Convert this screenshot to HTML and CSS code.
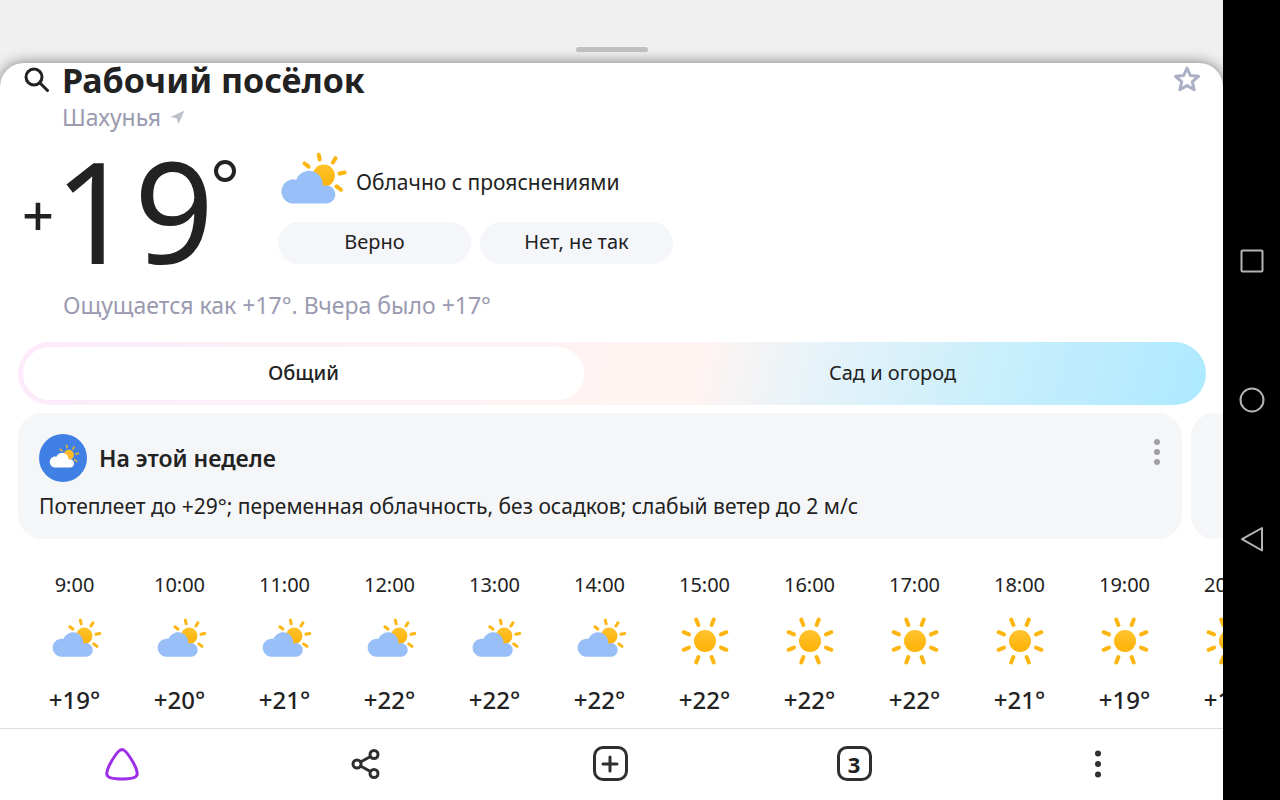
FILE: index.html
```html
<!doctype html>
<html lang="ru">
    <head>
        <meta charset="utf-8">
        <meta name="viewport" content="width=device-width, initial-scale=1">
        <title>Погода — Рабочий посёлок</title>
        <link rel="stylesheet" href="styles.css">
    </head>

    <body>
        <svg class="defs" width="0" height="0" aria-hidden="true">
            <linearGradient id="sunfill" x1="0" y1="0" x2="0" y2="1">
                <stop offset="0" stop-color="#ffc32e"/>
                <stop offset="1" stop-color="#fdb206"/>
            </linearGradient>
            <symbol id="cloudy" viewBox="827 347 223 223">
                <circle cx="975" cy="438" r="33" fill="url(#sunfill)"/>
                <path d="M960 376l3 14M1010 386l-8 13M1022 432l15-3M1013 470l13 10M918 402l12 9" fill="none" stroke="#fdb511" stroke-width="12" stroke-linecap="round"/>
                <path d="M882 521a36 36 0 1 1 11-71a41 41 0 0 1 79 19a27 27 0 1 1 9 52z" fill="#98bff8"/>
            </symbol>
            <symbol id="sunny" viewBox="0 0 56 56">
                <circle cx="28" cy="28" r="11" fill="url(#sunfill)"/>
                <g id="rays" stroke="#fdb511" stroke-width="4" stroke-linecap="round">
                    <path d="M34.6 12l2.2-5.4M44 21.4l5.4-2.2M44 34.6l5.4 2.2M34.6 44l2.2 5.4M21.4 44l-2.2 5.4M12 34.6l-5.4 2.2M12 21.4l-5.4-2.2M21.4 12l-2.2-5.4"/>
                </g>
            </symbol>
        </svg>

        <div class="app">
            <div class="grabarea"><div class="grab"></div></div>

            <main class="sheet">
                <header class="place">
                    <button class="iconbtn" aria-label="Поиск">
                        <svg width="26" height="26" viewBox="0 0 26 26" fill="none" stroke="#222" stroke-width="3" stroke-linecap="round"><circle cx="11" cy="10" r="8"/><path d="M17 16l7.500 7.500"/></svg>
                    </button>
                    <h1>Рабочий посёлок</h1>
                    <button class="iconbtn star" aria-label="В избранное">
                        <svg width="28" height="28" viewBox="0 0 28 28" fill="none" stroke="#acb0c6" stroke-width="3" stroke-linejoin="round"><path d="M14 2l3.300 7.500 8.200.8-6.200 5.400 1.900 8.100L14 19.600l-7.200 4.200 1.900-8.100-6.200-5.400 8.200-.8z"/></svg>
                    </button>
                </header>
                <div class="region">
                    <span>Шахунья</span>
                    <svg width="15" height="15" viewBox="0 0 15 15" fill="#bbc0ca"><path d="M14.500.5L8.500 14 6.700 8.300.5 6.900z"/></svg>
                </div>

                <section class="now">
                    <div class="temp"><span class="sign">+</span><span class="value">19</span><span class="deg"></span></div>
                    <div class="condition">
                        <div class="state">
                            <svg class="bigicon"><use href="#cloudy"/></svg>
                            <span>Облачно с прояснениями</span>
                        </div>
                        <div class="answers">
                            <button>Верно</button>
                            <button>Нет, не так</button>
                        </div>
                    </div>
                </section>
                <p class="feels">Ощущается как +17°. Вчера было +17°</p>

                <div class="modes">
                    <button class="active">Общий</button>
                    <button>Сад и огород</button>
                </div>

                <div class="cards">
                    <article class="card">
                        <div class="cardhead">
                            <span class="badge"><svg width="34" height="34" viewBox="825 347 223 223"><circle cx="975" cy="438" r="33" fill="#fdb92a"/><path d="M960 376l3 14M1010 386l-8 13M1022 432l15-3M1013 470l13 10M918 402l12 9" fill="none" stroke="#d5ad45" stroke-width="12" stroke-linecap="round"/><path d="M882 521a36 36 0 1 1 11-71a41 41 0 0 1 79 19a27 27 0 1 1 9 52z" fill="#fff"/></svg></span>
                            <h2>На этой неделе</h2>
                            <button class="iconbtn" aria-label="Ещё">
                                <svg width="8" height="28" viewBox="0 0 8 28" fill="#a0a0a2"><circle cx="4" cy="4" r="3"/><circle cx="4" cy="14" r="3"/><circle cx="4" cy="24" r="3"/></svg>
                            </button>
                        </div>
                        <p>Потеплеет до +29°; переменная облачность, без осадков; слабый ветер до 2 м/с</p>
                    </article>
                    <article class="card"></article>
                </div>

                <ul class="hours">
                    <li><time>9:00</time><svg><use href="#cloudy"/></svg><b>+19°</b></li>
                    <li><time>10:00</time><svg><use href="#cloudy"/></svg><b>+20°</b></li>
                    <li><time>11:00</time><svg><use href="#cloudy"/></svg><b>+21°</b></li>
                    <li><time>12:00</time><svg><use href="#cloudy"/></svg><b>+22°</b></li>
                    <li><time>13:00</time><svg><use href="#cloudy"/></svg><b>+22°</b></li>
                    <li><time>14:00</time><svg><use href="#cloudy"/></svg><b>+22°</b></li>
                    <li><time>15:00</time><svg><use href="#sunny"/></svg><b>+22°</b></li>
                    <li><time>16:00</time><svg><use href="#sunny"/></svg><b>+22°</b></li>
                    <li><time>17:00</time><svg><use href="#sunny"/></svg><b>+22°</b></li>
                    <li><time>18:00</time><svg><use href="#sunny"/></svg><b>+21°</b></li>
                    <li><time>19:00</time><svg><use href="#sunny"/></svg><b>+19°</b></li>
                    <li><time>20:00</time><svg><use href="#sunny"/></svg><b>+17°</b></li>
                </ul>
            </main>

            <nav class="toolbar">
                <button aria-label="Алиса">
                    <svg width="36" height="36" viewBox="0 0 36 36" fill="none" stroke="#9d2fe8" stroke-width="3"><path d="M18 3.500c2.500 0 4.500 2.500 7.500 7 4 6 7.700 13 7.700 17.500 0 4-7 5-15.200 5s-15.200-1-15.200-5c0-4.500 3.700-11.500 7.700-17.500 3-4.500 5-7 7.500-7z"/></svg>
                </button>
                <button aria-label="Поделиться">
                    <svg width="30" height="30" viewBox="0 0 30 30" fill="none" stroke="#2f2f2f" stroke-width="3"><circle cx="6" cy="15" r="4"/><circle cx="23" cy="5.500" r="4"/><circle cx="23" cy="24.500" r="4"/><path d="M9.500 13l10-5.500M9.500 17l10 5.500"/></svg>
                </button>
                <button aria-label="Новая вкладка">
                    <span class="square"><svg width="18" height="18" viewBox="0 0 18 18" stroke="#2f2f2f" stroke-width="3" stroke-linecap="round"><path d="M9 2v14M2 9h14"/></svg></span>
                </button>
                <button aria-label="Вкладки"><span class="square">3</span></button>
                <button aria-label="Меню">
                    <svg width="8" height="28" viewBox="0 0 8 28" fill="#2f2f2f"><circle cx="4" cy="3.500" r="3"/><circle cx="4" cy="14" r="3"/><circle cx="4" cy="24.500" r="3"/></svg>
                </button>
            </nav>
        </div>

        <nav class="system">
            <button aria-label="Недавние"><svg width="26" height="26" viewBox="0 0 26 26" fill="none" stroke="#b4b4b4" stroke-width="2"><rect x="2.500" y="2.500" width="21" height="21" rx="1"/></svg></button>
            <button aria-label="Домой"><svg width="26" height="26" viewBox="0 0 26 26" fill="none" stroke="#b4b4b4" stroke-width="2"><circle cx="13" cy="13" r="11.500"/></svg></button>
            <button aria-label="Назад"><svg width="26" height="26" viewBox="0 0 26 26" fill="none" stroke="#b4b4b4" stroke-width="2" stroke-linejoin="round"><path d="M23 2v22.500L3 13.200z"/></svg></button>
        </nav>
    </body>
</html>
```
FILE: styles.css
```css
*{
    box-sizing: border-box;
}

body{
    margin: 0;
    height: 100vh;
    display: flex;
    background-color: black;
    color: #222;
    font-family: "Noto Sans", "Open Sans", sans-serif;
    font-size: 20px;
    line-height: 28px;
}

h1, h2, p, ul{
    margin: 0;
    padding: 0;
}

button{
    border: none;
    padding: 0;
    background: none;
    color: inherit;
    font: inherit;
    display: flex;
    align-items: center;
    justify-content: center;
}

svg{
    display: block;
    flex: none;
}

.defs{
    position: absolute;
}

.app{
    flex: 1;
    min-width: 0;
    display: flex;
    flex-direction: column;
    overflow: hidden;
    background-color: #f0f0f0;
}

.grabarea{
    height: 63px;
    flex: none;
    display: flex;
    align-items: flex-end;
    justify-content: center;
    padding-bottom: 11px;
}

.grab{
    width: 72px;
    height: 5px;
    border-radius: 3px;
    background-color: #c2c2c2;
}

.sheet{
    flex: 1;
    min-height: 0;
    overflow: hidden;
    background-color: white;
    border-radius: 24px 24px 0 0;
    box-shadow: 0 0 14px rgba(0, 0, 0, 0.5);
}

/* place name */
.place{
    display: flex;
    align-items: center;
    height: 34px;
    padding: 0 22px 0 23px;
}

.place h1{
    flex: 1;
    margin-left: 13px;
    font-size: 34px;
    line-height: 34px;
    font-weight: 700;
}

.region{
    display: flex;
    align-items: center;
    gap: 9px;
    height: 40px;
    padding-left: 62px;
    color: #9a9ab0;
    font-size: 23px;
}

/* current weather */
.now{
    display: flex;
    height: 146px;
    padding-left: 22px;
}

.temp{
    display: flex;
    align-items: center;
    width: 252px;
}

.sign{
    width: 32px;
    padding-top: 8px;
    font-size: 56px;
    font-weight: 500;
}

.value{
    font-size: 140px;
    line-height: 140px;
}

.deg{
    align-self: flex-start;
    width: 22px;
    height: 22px;
    margin-top: 23px;
    border: 4px solid #222;
    border-radius: 50%;
}

.condition{
    padding-top: 9px;
}

.state{
    display: flex;
    align-items: center;
    gap: 7px;
    height: 76px;
    padding-bottom: 4px;
    font-size: 21px;
}

.bigicon{
    width: 75px;
    height: 75px;
}

.answers{
    display: flex;
    gap: 9px;
    margin-left: 4px;
}

.answers button{
    width: 193px;
    height: 42px;
    padding-bottom: 2px;
    border-radius: 21px;
    background-color: #f4f6fa;
}

.feels{
    padding-left: 63px;
    color: #9a9ab0;
    font-size: 23px;
    line-height: 44px;
}

/* forecast switch */
.modes{
    display: flex;
    height: 63px;
    margin: 15px 17px 8px 18px;
    padding: 5px;
    border-radius: 32px;
    background: linear-gradient(105deg, #fdebfc 0%, #fff4f2 50%, #fff4f2 57%, #e6f3f9 67%, #c5eefd 84%, #ade9ff 100%);
}

.modes button{
    flex: 1;
    padding-bottom: 2px;
    border-radius: 27px;
}

.modes .active{
    flex: 0 0 calc(50% - 28px);
    background-color: white;
    font-weight: 500;
}

.cards{
    display: flex;
    gap: 9px;
    padding-left: 18px;
    overflow: hidden;
}

.card{
    flex: 0 0 calc(100% - 41px);
    padding: 21px;
    height: 126px;
    border-radius: 24px;
    background-color: #f5f6f8;
}

.cardhead{
    display: flex;
    align-items: center;
    gap: 12px;
}

.badge{
    width: 48px;
    height: 48px;
    border-radius: 50%;
    background-color: #4080e4;
    display: flex;
    align-items: center;
    justify-content: center;
}

.card h2{
    flex: 1;
    font-size: 23px;
    font-weight: 600;
}

.cardhead .iconbtn{
    align-self: flex-start;
    padding-top: 4px;
}

.card p{
    font-size: 21px;
    line-height: 48px;
    white-space: nowrap;
}

/* hourly forecast */
.hours{
    display: flex;
    list-style: none;
    padding: 32px 0 0 22px;
}

.hours li{
    flex: 0 0 105px;
    display: flex;
    flex-direction: column;
    align-items: center;
    gap: 14px;
}

.hours svg{
    width: 56px;
    height: 56px;
}

.hours b{
    font-size: 24px;
    line-height: 34px;
    font-weight: 500;
}

/* browser toolbar */
.toolbar{
    flex: none;
    display: flex;
    height: 72px;
    padding: 0 3px 2px 0;
    border-top: 1px solid #dcdcdc;
    background-color: white;
}

.toolbar button{
    flex: 1;
}

.square{
    display: flex;
    align-items: center;
    justify-content: center;
    width: 35px;
    height: 35px;
    border: 3px solid #2f2f2f;
    border-radius: 10px;
    font-weight: 700;
    font-size: 22px;
}

/* phone buttons */
.system{
    flex: none;
    width: 57px;
    display: flex;
    flex-direction: column;
    align-items: center;
    justify-content: center;
    gap: 113px;
}
```
